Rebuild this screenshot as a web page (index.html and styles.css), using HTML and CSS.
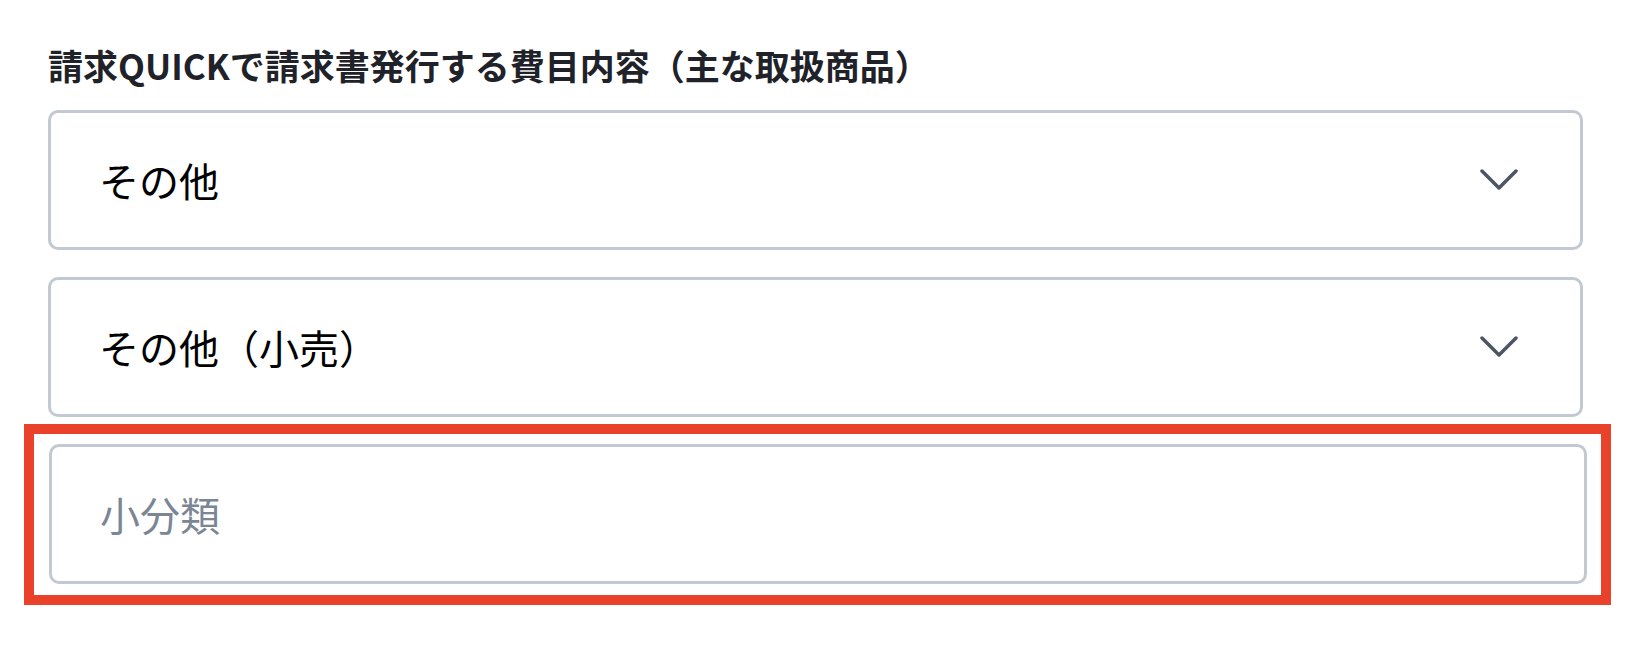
FILE: index.html
```html
<!DOCTYPE html>
<html lang="ja">
<head>
    <meta charset="UTF-8">
    <meta name="viewport" content="width=device-width, initial-scale=1.0">
    <title>費目内容</title>
    <link rel="stylesheet" href="styles.css">
</head>
<body>
    <div class="form">
        <!-- 費目ラベル -->
        <p class="label">請求QUICKで請求書発行する費目内容（主な取扱商品）</p>

        <!-- 大分類 -->
        <div class="select">
            <span class="select-value">その他</span>
            <svg class="chevron" width="38" height="22" viewBox="0 0 38 22">
                <polyline points="2,2 19,19 36,2" />
            </svg>
        </div>

        <!-- 中分類 -->
        <div class="select">
            <span class="select-value">その他（小売）</span>
            <svg class="chevron" width="38" height="22" viewBox="0 0 38 22">
                <polyline points="2,2 19,19 36,2" />
            </svg>
        </div>

        <!-- 小分類（入力欄） -->
        <div class="highlight">
            <input class="text-input" type="text" placeholder="小分類">
        </div>
    </div>
</body>
</html>
```

FILE: styles.css
```css
body {
    margin: 0;
    background-color: #fff;
    font-family: "Noto Sans CJK JP", "Noto Sans", sans-serif;
}

.form {
    width: 1535px;
    padding: 40px 0 0 48px;
}

.label {
    margin: 0 0 20px;
    font-size: 35px;
    font-weight: 700;
    line-height: 50px;
    color: #1f2329;
}

.select {
    display: flex;
    align-items: center;
    justify-content: space-between;
    height: 140px;
    box-sizing: border-box;
    padding: 0 62px 0 48px;
    border: 3px solid #c3c9d2;
    border-radius: 10px; /* 角丸 */
    background-color: #fff;
}

.select + .select {
    margin-top: 27px;
}

.select-value {
    font-size: 40px;
    color: #000;
}

.chevron polyline {
    fill: none;
    stroke: #4b5563;
    stroke-width: 3.5;
    stroke-linecap: round;
    stroke-linejoin: round;
}

/* 赤枠で囲んだ入力欄 */
.highlight {
    margin: 7px -28px 0 -24px;
    padding: 10px 14px 11px 15px;
    border: 10px solid #e9412a;
}

.text-input {
    display: block;
    width: 100%;
    height: 140px;
    box-sizing: border-box;
    padding: 0 48px;
    border: 3px solid #c3c9d2;
    border-radius: 10px;
    outline: none;
    font-family: inherit;
    font-size: 40px;
    color: #000;
}

.text-input::placeholder {
    color: #7b8695;
}
```
